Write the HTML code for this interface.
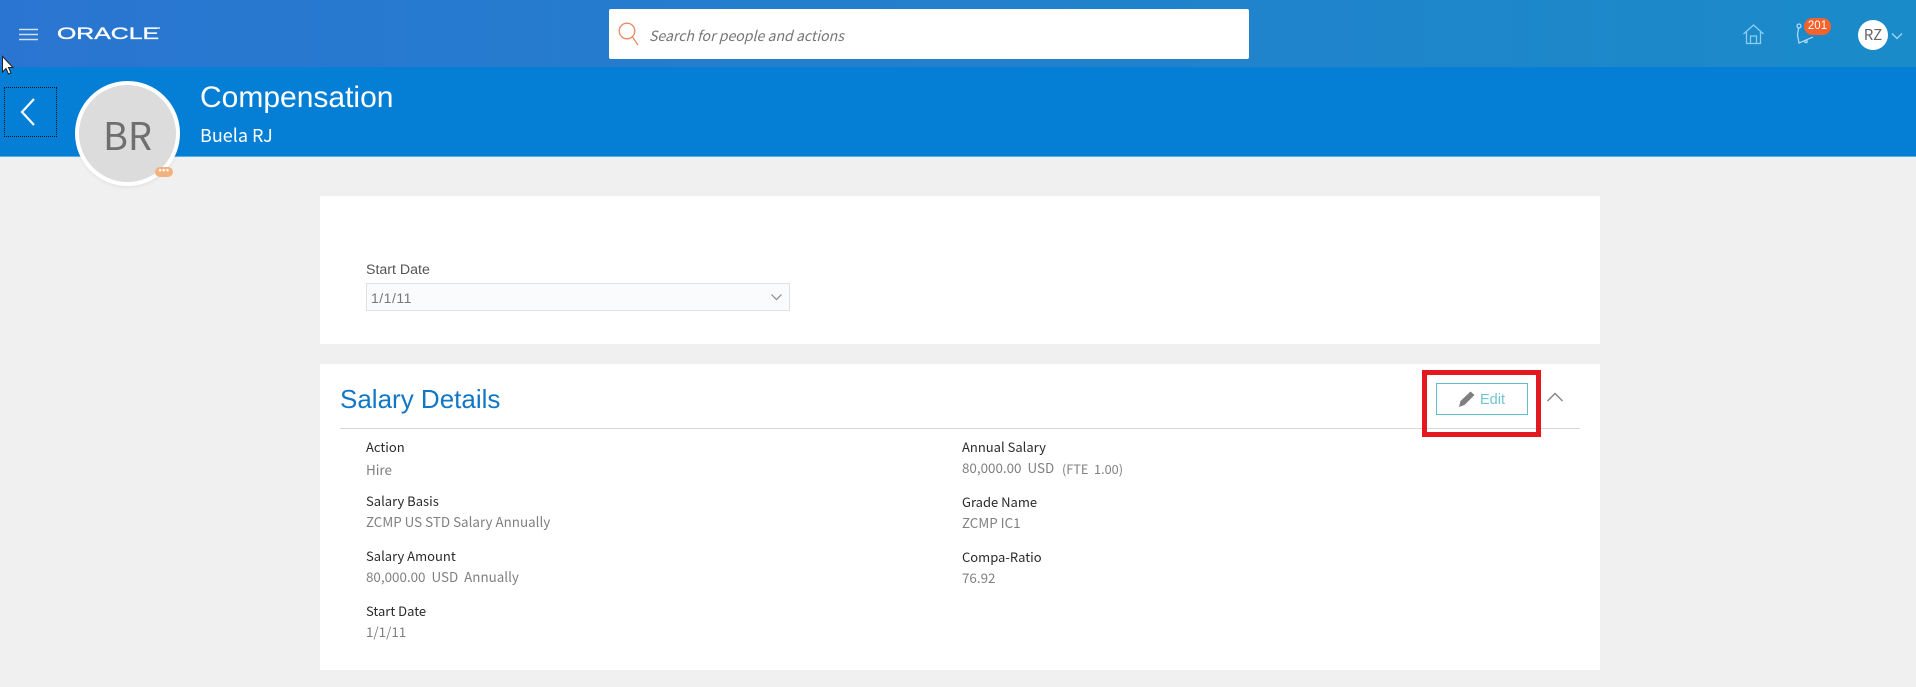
<!DOCTYPE html>
<html><head><meta charset="utf-8">
<style>
*{box-sizing:border-box;margin:0;padding:0}
html,body{width:1916px;height:687px;overflow:hidden;background:#f0f0f0;font-family:"Liberation Sans",sans-serif}
.a{position:absolute;white-space:nowrap}
.s{font-family:"Noto Sans CJK JP","Liberation Sans",sans-serif;font-size:13.4px;line-height:18px}
.l{color:#2a2a2a;font-size:13px}
.v{color:#808080;margin-top:-1px}
</style></head><body>
<div class="a" style="left:0;top:0;width:1916px;height:67px;background:linear-gradient(90deg,#2a75d1,#1a8bc9)"></div>
<div class="a" style="left:0;top:67px;width:1916px;height:90px;background:#047fd5;border-bottom:1px solid #5aaee6"></div>

<svg class="a" style="left:19px;top:28px" width="20" height="14"><path d="M0 1.500H19M0 6.500H19M0 11.500H19" stroke="#cfe0f5" stroke-width="1.600"/></svg>
<div class="a" style="left:57px;top:25px;height:17px;line-height:17px;color:#fff;font-size:17px;-webkit-text-stroke:.35px #fff;transform-origin:0 50%;transform:scaleX(1.46)">ORACLE</div>
<div class="a" style="left:158px;top:27px;width:2px;height:2px;background:#dbe8f8;border-radius:50%"></div>

<svg class="a" style="left:0;top:54px" width="16" height="22"><path d="M2.500 2.500V18L6 14.500 8.500 20 11 19 8.500 13.500H13Z" fill="#fff" stroke="#222" stroke-width="1"/></svg>

<div class="a" style="left:609px;top:9px;width:640px;height:50px;background:#fff;border-radius:2px"></div>
<svg class="a" style="left:618px;top:22px" width="24" height="26" fill="none" stroke="#e98a63" stroke-width="1.300"><circle cx="9" cy="9" r="7.800"/><path d="M14.500 15L20 23"/></svg>
<div class="a s" style="left:649px;top:27px;color:#757575;font-style:italic;font-size:14.100px">Search for people and actions</div>

<svg class="a" style="left:1743px;top:24px" width="21" height="21" fill="none" stroke="#8fcdf0" stroke-width="1.300"><path d="M.5 10L10.500 1 20.500 10M3.500 8V19.500H17.500V8M7.500 19.500V12H13.500V19.500"/></svg>
<svg class="a" style="left:1794px;top:21px" width="32" height="26" fill="none" stroke="#b5def5" stroke-width="1.200"><path d="M4.500 7L3.500 14 5 22 19 16"/><circle cx="5" cy="5" r="2"/><circle cx="12" cy="20.500" r="1.200"/></svg>
<div class="a" style="left:1804px;top:18px;width:27px;height:17px;background:#f6622a;border-radius:9px;color:#fff;font-size:11.500px;line-height:17px;text-align:center">201</div>
<div class="a" style="left:1858px;top:20px;width:30px;height:30px;background:#fff;border-radius:50%;color:#666;font-size:15px;line-height:30px;text-align:center;font-family:'Noto Sans CJK JP',sans-serif">RZ</div>
<svg class="a" style="left:1890px;top:32px" width="14" height="9" fill="none" stroke="#a5d6f2" stroke-width="1.300"><path d="M2 1.500L7 6.500 12 1.500"/></svg>

<div class="a" style="left:4px;top:87px;width:53px;height:50px;border:1px dotted #111"></div>
<svg class="a" style="left:19px;top:96px" width="20" height="32" fill="none" stroke="#fff" stroke-width="2.200"><path d="M15 3L3 16 15 29"/></svg>

<div class="a" style="left:75px;top:81px;width:105px;height:105px;border-radius:50%;background:#dcdcdc;border:4px solid #fff;box-shadow:0 2px 3px rgba(0,0,0,.05);color:#6f6f6f;font-size:38px;line-height:97px;text-align:center;font-family:'Noto Sans CJK JP',sans-serif">BR</div>
<div class="a" style="left:155px;top:167px;width:18px;height:10px;background:#f2b27e;border-radius:5px;color:#fff;font-size:9px;line-height:6px;text-align:center;font-weight:bold;letter-spacing:.5px">•••</div>

<div class="a" style="left:200px;top:80px;color:#fff;font-size:30px;line-height:36px">Compensation</div>
<div class="a s" style="left:200px;top:123px;color:#fff;font-size:18px;line-height:24px">Buela RJ</div>

<div class="a" style="left:320px;top:196px;width:1280px;height:148px;background:#fff"></div>
<div class="a" style="left:366px;top:261px;color:#555;font-size:14.200px;line-height:18px">Start Date</div>
<div class="a" style="left:366px;top:283px;width:424px;height:28px;background:#fafbfd;border:1px solid #dfe1e4;color:#777;font-size:14px;line-height:28px;padding-left:4px;letter-spacing:.5px">1/1/11</div>
<svg class="a" style="left:770px;top:293px" width="13" height="9" fill="none" stroke="#888" stroke-width="1.200"><path d="M1.500 1.500L6.500 6.500 11.500 1.500"/></svg>

<div class="a" style="left:320px;top:364px;width:1280px;height:306px;background:#fff"></div>
<div class="a" style="left:340px;top:382px;color:#1277c4;font-size:26px;line-height:34px">Salary Details</div>
<div class="a" style="left:340px;top:428px;width:1240px;height:1px;background:#d6d6d6"></div>

<div class="a" style="left:1436px;top:383px;width:92px;height:32px;border:1px solid #5fc0cc;background:#fff"></div>
<svg class="a" style="left:1458px;top:390px" width="18" height="18"><path d="M1 17L2.500 11 12.500 1.500 16.500 5 6.500 15Z" fill="#7f7f7f"/></svg>
<div class="a" style="left:1480px;top:391px;color:#6fc6d1;font-size:14.500px;line-height:18px">Edit</div>
<div class="a" style="left:1422px;top:370px;width:119px;height:67px;border:5px solid #e3191f"></div>
<svg class="a" style="left:1546px;top:391px" width="18" height="12" fill="none" stroke="#888" stroke-width="1.500"><path d="M1.500 10L9 2.500 16.500 10"/></svg>

<div class="a s l" style="left:366px;top:438px">Action</div>
<div class="a s v" style="left:366px;top:461px">Hire</div>
<div class="a s l" style="left:366px;top:492px">Salary Basis</div>
<div class="a s v" style="left:366px;top:513px">ZCMP US STD Salary Annually</div>
<div class="a s l" style="left:366px;top:547px">Salary Amount</div>
<div class="a s v" style="left:366px;top:568px">80,000.00&nbsp; USD&nbsp; Annually</div>
<div class="a s l" style="left:366px;top:602px">Start Date</div>
<div class="a s v" style="left:366px;top:623px">1/1/11</div>

<div class="a s l" style="left:962px;top:438px">Annual Salary</div>
<div class="a s v" style="left:962px;top:459px">80,000.00&nbsp; USD</div>
<div class="a s v" style="left:1062px;top:461px;font-size:12.700px">(FTE&nbsp; 1.00)</div>
<div class="a s l" style="left:962px;top:493px">Grade Name</div>
<div class="a s v" style="left:962px;top:514px">ZCMP IC1</div>
<div class="a s l" style="left:962px;top:548px">Compa-Ratio</div>
<div class="a s v" style="left:962px;top:569px">76.92</div>
</body></html>
